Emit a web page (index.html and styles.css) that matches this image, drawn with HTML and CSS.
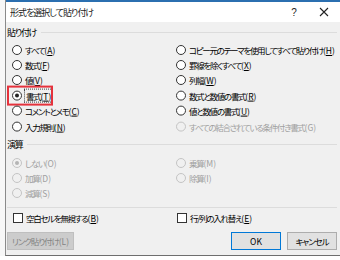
FILE: index.html
```html
<!DOCTYPE html>
<html lang="ja">
  <head>
    <meta charset="UTF-8" />
    <title>形式を選択して貼り付け</title>
    <link rel="stylesheet" href="styles.css">
  </head>
  <body>
    <div class="screen">
      <div class="backdrop"></div>
      <div class="dialog">
        <div class="titlebar">
          <span class="title">形式を選択して貼り付け</span>
          <span class="title-btn help">?</span>
          <span class="title-btn close">
            <svg width="10" height="10" viewBox="0 0 10 10">
              <path d="M1 1 L9 9 M9 1 L1 9" stroke="#222" stroke-width="1.1" fill="none" />
            </svg>
          </span>
        </div>

        <div class="body">
          <div class="group-head"><span>貼り付け</span><i></i></div>
          <div class="options paste">
            <label class="opt"><span class="radio"></span>すべて<span class="key">(<u>A</u>)</span></label>
            <label class="opt"><span class="radio"></span>コピー元のテーマを使用してすべて貼り付け<span class="key">(<u>H</u>)</span></label>
            <label class="opt"><span class="radio"></span>数式<span class="key">(<u>F</u>)</span></label>
            <label class="opt"><span class="radio"></span>罫線を除くすべて<span class="key">(<u>X</u>)</span></label>
            <label class="opt"><span class="radio"></span>値<span class="key">(<u>V</u>)</span></label>
            <label class="opt"><span class="radio"></span>列幅<span class="key">(<u>W</u>)</span></label>
            <label class="opt marked"><span class="radio checked"></span><span class="focus">書式<span class="key">(<u>T</u>)</span></span><span class="callout"></span></label>
            <label class="opt"><span class="radio"></span>数式と数値の書式<span class="key">(<u>R</u>)</span></label>
            <label class="opt"><span class="radio"></span>コメントとメモ<span class="key">(<u>C</u>)</span></label>
            <label class="opt"><span class="radio"></span>値と数値の書式<span class="key">(<u>U</u>)</span></label>
            <label class="opt"><span class="radio"></span>入力規則<span class="key">(<u>N</u>)</span></label>
            <label class="opt off"><span class="radio"></span>すべての結合されている条件付き書式<span class="key">(G)</span></label>
          </div>

          <div class="group-head calc"><span>演算</span><i></i></div>
          <div class="options ops">
            <label class="opt off"><span class="radio checked"></span>しない<span class="key">(O)</span></label>
            <label class="opt off"><span class="radio"></span>乗算<span class="key">(M)</span></label>
            <label class="opt off"><span class="radio"></span>加算<span class="key">(D)</span></label>
            <label class="opt off"><span class="radio"></span>除算<span class="key">(I)</span></label>
            <label class="opt off"><span class="radio"></span>減算<span class="key">(S)</span></label>
          </div>

          <div class="rule"></div>

          <div class="options checks">
            <label class="opt"><span class="check"></span>空白セルを無視する<span class="key">(<u>B</u>)</span></label>
            <label class="opt"><span class="check"></span>行/列の入れ替え<span class="key">(<u>E</u>)</span></label>
          </div>

          <div class="actions">
            <button class="btn btn-disabled">リンク貼り付け<span class="key">(L)</span></button>
            <span class="spacer"></span>
            <button class="btn btn-default">OK</button>
            <button class="btn">キャンセル</button>
          </div>
        </div>
      </div>
    </div>
  </body>
</html>
```

FILE: styles.css
```css
* {
  margin: 0;
  padding: 0;
  box-sizing: border-box;
}

body {
  width: 340px;
  height: 260px;
  overflow: hidden;
  background: #ffffff;
  font-family: "Noto Sans CJK JP", "Noto Sans", sans-serif;
  font-size: 8.5px;
  letter-spacing: -1.3px;
  font-feature-settings: "palt";
  color: #000;
}

.key {
  letter-spacing: 0;
}

.screen {
  display: flex;
  height: 256px;
}

.backdrop {
  width: 5px;
  flex-shrink: 0;
  background: #f7f7f7;
}

.dialog {
  flex: 1;
  min-width: 0;
  overflow: hidden;
  display: flex;
  flex-direction: column;
  background: #f0f0f0;
  border-left: 1px solid #8a8a8a;
  border-bottom: 1px solid #6e6e6e;
}

.titlebar {
  height: 22px;
  background: #ffffff;
  display: flex;
  align-items: center;
  padding-left: 4px;
  border-top: 2px solid #2b6fb0;
}

.title {
  flex: 1;
  color: #222;
  font-size: 9px;
  letter-spacing: -1px;
}

.title-btn {
  width: 30px;
  display: flex;
  justify-content: center;
  align-items: center;
  color: #222;
}

.help {
  font-family: "Liberation Sans", sans-serif;
  font-size: 10px;
  letter-spacing: 0;
}

.close {
  margin-right: 1px;
}

.body {
  flex: 1;
  display: flex;
  flex-direction: column;
  padding: 3px 3px 0 1px;
}

.group-head {
  display: flex;
  align-items: center;
  height: 14px;
  margin-bottom: 3px;
}

.group-head span {
  font-size: 9px;
}

.group-head i {
  flex: 1;
  height: 1px;
  margin-left: 5px;
  background: #dcdcdc;
}

.group-head.calc {
  margin-top: 4px;
  margin-bottom: 4px;
}

.options {
  display: grid;
  grid-template-columns: 164px 1fr;
  grid-auto-rows: 15.2px;
  padding-left: 5px;
}

.opt {
  display: flex;
  align-items: center;
  position: relative;
  white-space: nowrap;
}

.opt u {
  text-decoration: underline;
}

.radio {
  width: 10px;
  height: 10px;
  flex-shrink: 0;
  border: 1px solid #333;
  border-radius: 50%;
  background: #fff;
  margin-right: 3px;
  display: flex;
  justify-content: center;
  align-items: center;
}

.radio.checked::after {
  content: "";
  width: 4px;
  height: 4px;
  border-radius: 50%;
  background: #222;
}

.off {
  color: #a0a0a0;
}

.off .radio {
  border-color: #c4c4c4;
  background: #f0f0f0;
}

.off .radio.checked::after {
  background: #b4b4b4;
}

.focus {
  outline: 1px dotted #444;
  outline-offset: 0;
  padding: 0 1px;
}

.callout {
  position: absolute;
  left: -5px;
  top: -3px;
  width: 46px;
  height: 20px;
  border: 2px solid #e5323c;
}

.paste .opt:nth-child(n + 7) {
  transform: translateY(0.6px);
}

.rule {
  height: 1px;
  background: #dcdcdc;
  margin: 6px 0 3px 0;
}

.check {
  width: 10px;
  height: 10px;
  flex-shrink: 0;
  border: 1px solid #333;
  background: #fff;
  margin-right: 3px;
}

.checks {
  padding-left: 6px;
}

.actions {
  display: flex;
  gap: 6px;
  margin-top: 6px;
  padding-left: 0;
}

.spacer {
  flex: 1;
}

.btn {
  height: 18px;
  padding: 0;
  white-space: nowrap;
  font-family: inherit;
  font-size: 8.5px;
  letter-spacing: -1.1px;
  font-feature-settings: "palt";
  background: #e1e1e1;
  border: 1px solid #adadad;
  color: #000;
}

.btn-disabled {
  width: 67px;
  background: #cccccc;
  border-color: #bfbfbf;
  color: #838383;
}

.btn-default {
  width: 50px;
  border-color: #0078d7;
  letter-spacing: 0;
}

.btn:last-child {
  width: 50px;
}
```
